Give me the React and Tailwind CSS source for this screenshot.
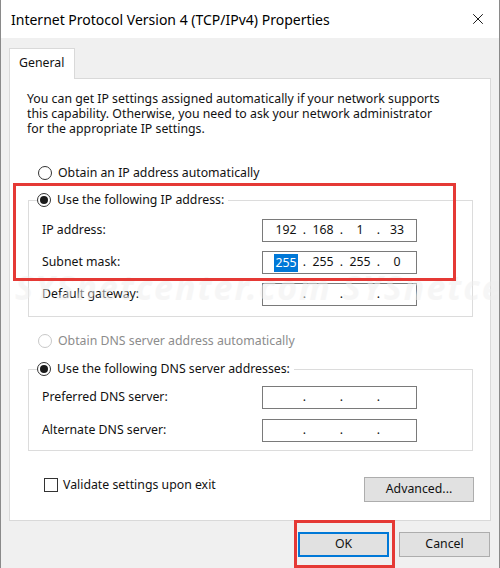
import { X } from "lucide-react";

const Radio = ({ checked, disabled }) => (
  <span
    className={`flex h-[14px] w-[14px] shrink-0 items-center justify-center rounded-full border bg-white ${
      disabled ? "border-[#c8c8c8]" : "border-[#333333]"
    }`}
  >
    {checked && <span className="h-[8px] w-[8px] rounded-full bg-[#1a1a1a]" />}
  </span>
);

const IpField = ({ parts = ["", "", "", ""], selectFirst = false }) => (
  <div className="flex h-[23px] w-[155px] items-center border border-[#7a7a7a] bg-white pl-[8px]">
    {parts.map((p, i) => (
      <div key={i} className="flex items-center">
        <span className="flex w-[30px] justify-center">
          {i === 0 && selectFirst ? (
            <span className="bg-[#0078d7] px-[1px] leading-[18px] text-white">{p}</span>
          ) : (
            <span>{p}</span>
          )}
        </span>
        {i < 3 && <span className="w-[7px] text-center">.</span>}
      </div>
    ))}
  </div>
);

const Row = ({ label, children, className = "" }) => (
  <div className={`flex items-center justify-between pl-[13px] pr-[55px] ${className}`}>
    <span>{label}</span>
    {children}
  </div>
);

export default function App() {
  return (
    <div
      className="relative flex h-[568px] w-[500px] flex-col overflow-hidden border-l border-r border-[#8a8a8a] bg-[#f0f0f0] text-[12.3px] text-[#111]"
      style={{ fontFamily: '"Segoe UI", "Noto Sans", "Liberation Sans", sans-serif' }}
    >
      {/* title bar */}
      <div className="flex h-[38px] items-center justify-between bg-white pl-[10px] pr-[12px]">
        <span className="text-[14px] text-black">Internet Protocol Version 4 (TCP/IPv4) Properties</span>
        <X size={18} strokeWidth={1.2} className="text-black" />
      </div>

      <div className="px-[8px] pt-[10px]">
        {/* tab */}
        <div className="relative z-10 -mb-px flex">
          <div className="h-[31px] w-[66px] border border-b-0 border-[#d9d9d9] bg-white pl-[9px] pt-[5px]">
            General
          </div>
        </div>

        {/* tab panel */}
        <div className="h-[443px] border border-[#d9d9d9] bg-white pl-[17px] pr-[15px] pt-[12px]">
          <p className="leading-[15px]">
            You can get IP settings assigned automatically if your network supports
            <br />
            this capability. Otherwise, you need to ask your network administrator
            <br />
            for the appropriate IP settings.
          </p>

          <div className="mt-[29px] flex h-[16px] items-center gap-[6px] pl-[11px]">
            <Radio />
            <span>Obtain an IP address automatically</span>
          </div>

          <fieldset className="mt-[11px] ml-[1px] mr-0 w-[445px] border border-[#dcdcdc] pb-[10px]">
            <legend className="ml-[8px] flex h-[16px] items-center gap-[6px] bg-white pr-[4px]">
              <Radio checked />
              <span>Use the following IP address:</span>
            </legend>
            <Row label="IP address:" className="mt-[11px]">
              <IpField parts={["192", "168", "1", "33"]} />
            </Row>
            <Row label="Subnet mask:" className="mt-[9px]">
              <IpField parts={["255", "255", "255", "0"]} selectFirst />
            </Row>
            <Row label="Default gateway:" className="mt-[9px]">
              <IpField />
            </Row>
          </fieldset>

          <div className="mt-[16px] flex h-[16px] items-center gap-[6px] pl-[11px] text-[#8c8c8c]">
            <Radio disabled />
            <span>Obtain DNS server address automatically</span>
          </div>

          <fieldset className="mt-[12px] ml-[1px] w-[445px] border border-[#dcdcdc] pb-[8px]">
            <legend className="ml-[8px] flex h-[16px] items-center gap-[6px] bg-white pr-[4px]">
              <Radio checked />
              <span>Use the following DNS server addresses:</span>
            </legend>
            <Row label="Preferred DNS server:" className="mt-[9px]">
              <IpField />
            </Row>
            <Row label="Alternate DNS server:" className="mt-[10px]">
              <IpField />
            </Row>
          </fieldset>

          <div className="mt-[25px] flex items-start justify-between pl-[17px] pr-[1px]">
            <div className="flex items-center gap-[5px]">
              <span className="h-[14px] w-[14px] border border-[#333333] bg-white" />
              <span>Validate settings upon exit</span>
            </div>
            <button className="mt-[1px] h-[25px] w-[110px] border border-[#adadad] bg-[#e1e1e1]">
              Advanced...
            </button>
          </div>
        </div>

        {/* dialog buttons */}
        <div className="mt-[11px] flex justify-end gap-[10px] pr-[1px]">
          <button className="h-[25px] w-[91px] border-2 border-[#0078d7] bg-[#e1e1e1]">OK</button>
          <button className="h-[25px] w-[91px] border border-[#adadad] bg-[#e1e1e1]">Cancel</button>
        </div>
      </div>

      {/* watermark */}
      <div className="pointer-events-none absolute left-[14px] top-[262px] select-none whitespace-nowrap text-[34px] font-bold italic tracking-[2px] text-[#efefef] opacity-50">
        SYSnetcenter.com SYSnetce
      </div>

      {/* red annotation boxes */}
      <div className="pointer-events-none absolute left-[12px] top-[183px] h-[98px] w-[443px] border-[3px] border-[#e53935]" />
      <div className="pointer-events-none absolute left-[293px] top-[520px] h-[48px] w-[101px] border-[3px] border-[#e53935]" />
    </div>
  );
}
